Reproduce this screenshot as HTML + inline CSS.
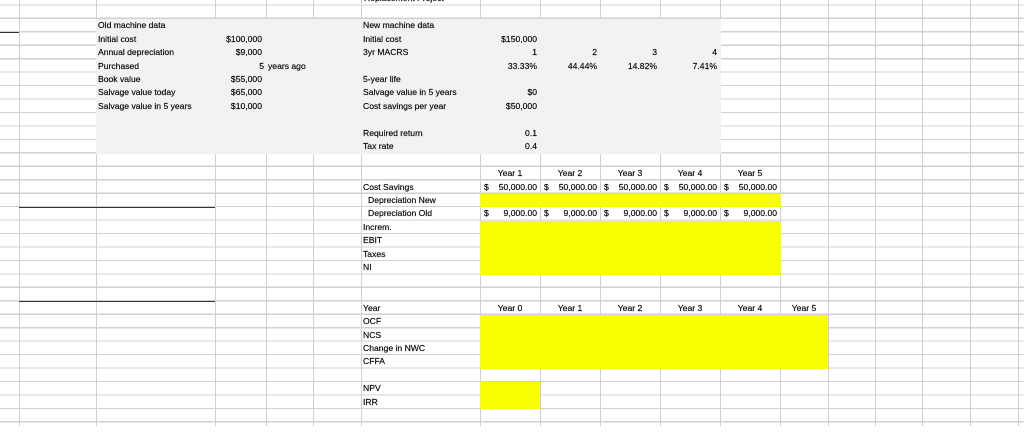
<!DOCTYPE html>
<html><head><meta charset="utf-8"><style>
html,body{margin:0;padding:0}
body{width:1024px;height:426px;overflow:hidden;position:relative;background:#fff;font-family:"Liberation Sans",sans-serif;font-size:8.6px;color:#000;-webkit-text-stroke:0.15px #000}
.g{position:absolute;left:0;top:-7.75px;width:1024px;height:440px;background:repeating-linear-gradient(to bottom,transparent 0,transparent 12.25px,#d0d0d0 12.25px,#d0d0d0 13.45px)}
.v{position:absolute;top:0;width:1.2px;height:426px;background:#d0d0d0}
.f{position:absolute}
.t{position:absolute;height:13.45px;line-height:13.8px;white-space:nowrap}
.r{text-align:right}
.c{text-align:center}
.a{display:flex;justify-content:space-between;box-sizing:border-box;padding:0 3px 0 4px}
.k{position:absolute;height:1.2px;background:#333}
</style></head><body>
<div class="g"></div>
<div class="v" style="left:19px"></div><div class="v" style="left:96px"></div><div class="v" style="left:215px"></div><div class="v" style="left:266px"></div><div class="v" style="left:313px"></div><div class="v" style="left:361px"></div><div class="v" style="left:480px"></div><div class="v" style="left:540px"></div><div class="v" style="left:600px"></div><div class="v" style="left:660px"></div><div class="v" style="left:720px"></div><div class="v" style="left:780px"></div><div class="v" style="left:828px"></div><div class="v" style="left:875px"></div><div class="v" style="left:922px"></div><div class="v" style="left:970px"></div><div class="v" style="left:1018px"></div>

<div class="f" style="left:96px;top:19px;width:625px;height:135px;background:#f2f2f2"></div>
<div class="f" style="left:480px;top:194px;width:301px;height:13px;background:#f8ff00"></div>
<div class="f" style="left:480px;top:221px;width:301px;height:54px;background:#f8ff00"></div>
<div class="f" style="left:480px;top:315px;width:348px;height:54px;background:#f8ff00"></div>
<div class="f" style="left:480px;top:382px;width:60px;height:27px;background:#f8ff00"></div>

<div class="k" style="left:0;top:32px;width:19px"></div>
<div class="k" style="left:19px;top:207px;width:196px"></div>
<div class="k" style="left:19px;top:301px;width:196px"></div>

<div class="t" style="left:364px;top:-7.75px">Replacement Project</div>

<div class="t" style="left:98px;top:19.15px">Old machine data</div>
<div class="t" style="left:98px;top:32.6px">Initial cost</div>
<div class="t" style="left:98px;top:46.05px">Annual depreciation</div>
<div class="t" style="left:98px;top:59.5px">Purchased</div>
<div class="t" style="left:98px;top:72.95px">Book value</div>
<div class="t" style="left:98px;top:86.4px">Salvage value today</div>
<div class="t" style="left:98px;top:99.85px">Salvage value in 5 years</div>
<div class="t r" style="left:215px;width:47px;top:32.6px">$100,000</div>
<div class="t r" style="left:215px;width:47px;top:46.05px">$9,000</div>
<div class="t r" style="left:215px;width:49px;top:59.5px">5</div>
<div class="t" style="left:268px;top:59.5px">years ago</div>
<div class="t r" style="left:215px;width:47px;top:72.95px">$55,000</div>
<div class="t r" style="left:215px;width:47px;top:86.4px">$65,000</div>
<div class="t r" style="left:215px;width:47px;top:99.85px">$10,000</div>

<div class="t" style="left:363px;top:19.15px">New machine data</div>
<div class="t" style="left:363px;top:32.6px">Initial cost</div>
<div class="t" style="left:363px;top:46.05px">3yr MACRS</div>
<div class="t" style="left:363px;top:72.95px">5-year life</div>
<div class="t" style="left:363px;top:86.4px">Salvage value in 5 years</div>
<div class="t" style="left:363px;top:99.85px">Cost savings per year</div>
<div class="t" style="left:363px;top:126.75px">Required return</div>
<div class="t" style="left:363px;top:140.2px">Tax rate</div>
<div class="t r" style="left:480px;width:57px;top:32.6px">$150,000</div>
<div class="t r" style="left:480px;width:57px;top:46.05px">1</div>
<div class="t r" style="left:540px;width:57px;top:46.05px">2</div>
<div class="t r" style="left:600px;width:57px;top:46.05px">3</div>
<div class="t r" style="left:660px;width:57px;top:46.05px">4</div>
<div class="t r" style="left:480px;width:57px;top:59.5px">33.33%</div>
<div class="t r" style="left:540px;width:57px;top:59.5px">44.44%</div>
<div class="t r" style="left:600px;width:57px;top:59.5px">14.82%</div>
<div class="t r" style="left:660px;width:57px;top:59.5px">7.41%</div>
<div class="t r" style="left:480px;width:57px;top:86.4px">$0</div>
<div class="t r" style="left:480px;width:57px;top:99.85px">$50,000</div>
<div class="t r" style="left:480px;width:57px;top:126.75px">0.1</div>
<div class="t r" style="left:480px;width:57px;top:140.2px">0.4</div>

<div class="t c" style="left:480px;width:60px;top:167.1px">Year 1</div>
<div class="t c" style="left:540px;width:60px;top:167.1px">Year 2</div>
<div class="t c" style="left:600px;width:60px;top:167.1px">Year 3</div>
<div class="t c" style="left:660px;width:60px;top:167.1px">Year 4</div>
<div class="t c" style="left:720px;width:60px;top:167.1px">Year 5</div>
<div class="t" style="left:363px;top:180.55px">Cost Savings</div>
<div class="t a" style="left:480px;width:60px;top:180.55px"><span>$</span><span>50,000.00</span></div>
<div class="t a" style="left:540px;width:60px;top:180.55px"><span>$</span><span>50,000.00</span></div>
<div class="t a" style="left:600px;width:60px;top:180.55px"><span>$</span><span>50,000.00</span></div>
<div class="t a" style="left:660px;width:60px;top:180.55px"><span>$</span><span>50,000.00</span></div>
<div class="t a" style="left:720px;width:60px;top:180.55px"><span>$</span><span>50,000.00</span></div>
<div class="t" style="left:368px;top:194px">Depreciation New</div>
<div class="t" style="left:368px;top:207.45px">Depreciation Old</div>
<div class="t a" style="left:480px;width:60px;top:207.45px"><span>$</span><span>9,000.00</span></div>
<div class="t a" style="left:540px;width:60px;top:207.45px"><span>$</span><span>9,000.00</span></div>
<div class="t a" style="left:600px;width:60px;top:207.45px"><span>$</span><span>9,000.00</span></div>
<div class="t a" style="left:660px;width:60px;top:207.45px"><span>$</span><span>9,000.00</span></div>
<div class="t a" style="left:720px;width:60px;top:207.45px"><span>$</span><span>9,000.00</span></div>
<div class="t" style="left:363px;top:220.9px">Increm.</div>
<div class="t" style="left:363px;top:234.35px">EBIT</div>
<div class="t" style="left:363px;top:247.8px">Taxes</div>
<div class="t" style="left:363px;top:261.25px">NI</div>

<div class="t" style="left:363px;top:301.6px">Year</div>
<div class="t c" style="left:480px;width:60px;top:301.6px">Year 0</div>
<div class="t c" style="left:540px;width:60px;top:301.6px">Year 1</div>
<div class="t c" style="left:600px;width:60px;top:301.6px">Year 2</div>
<div class="t c" style="left:660px;width:60px;top:301.6px">Year 3</div>
<div class="t c" style="left:720px;width:60px;top:301.6px">Year 4</div>
<div class="t c" style="left:780px;width:48px;top:301.6px">Year 5</div>
<div class="t" style="left:363px;top:315.05px">OCF</div>
<div class="t" style="left:363px;top:328.5px">NCS</div>
<div class="t" style="left:363px;top:341.95px">Change in NWC</div>
<div class="t" style="left:363px;top:355.4px">CFFA</div>
<div class="t" style="left:363px;top:382.3px">NPV</div>
<div class="t" style="left:363px;top:395.75px">IRR</div>
</body></html>
